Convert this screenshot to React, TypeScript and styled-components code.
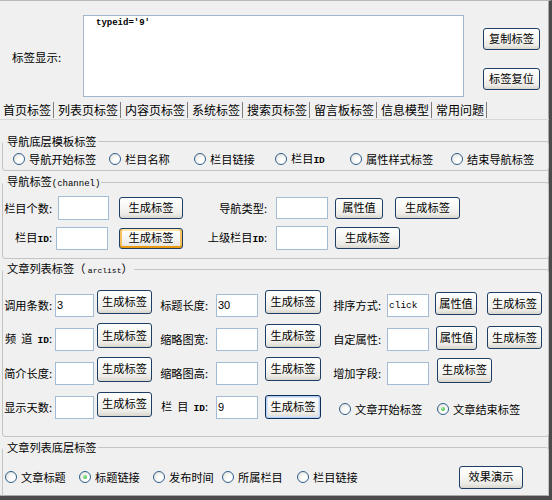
import React from "react";
import styled, { createGlobalStyle, css } from "styled-components";

const GlobalStyle = createGlobalStyle`
	html, body {
		margin: 0;
		padding: 0;
		background: #f0f0f0;
	}
	body {
		font-family: "Noto Sans CJK SC", "Liberation Sans", sans-serif;
		font-size: 11.2px;
		color: #000;
	}
	* {
		box-sizing: border-box;
	}
`;

const Window = styled.div`
	width: 552px;
	height: 500px;
	overflow: hidden;
	display: flex;
	flex-direction: column;
	background: #f0f0f0;
	border-top: 1px solid #b9b9b9;
	border-right: 3px solid #4b4b4b;
	border-bottom: 4px solid #4b4b4b;
	box-shadow: inset -1px -1px 0 #a8a8a8;
`;

const Header = styled.div`
	height: 99px;
	flex: none;
	display: grid;
	grid-template-columns: 83px 381px 1fr;
`;

const HeaderLabel = styled.div`
	font-size: 11.5px;
	line-height: 16px;
	padding-left: 12px;
	margin-top: 48px;
	white-space: nowrap;
`;

const TagText = styled.textarea`
	margin-top: 14px;
	height: 82px;
	width: 381px;
	resize: none;
	border: 1px solid #9fb6cd;
	background: #fff;
	padding: 2px 12px;
	font-family: "Liberation Mono", monospace;
	font-size: 9px;
	font-weight: bold;
	color: #000;
	outline: none;
`;

const SideButtons = styled.div`
	display: flex;
	flex-direction: column;
	gap: 18px;
	padding: 27px 0 0 19px;
`;

const TabStrip = styled.div`
	height: 20px;
	flex: none;
	display: flex;
	align-items: center;
	border-bottom: 1px solid #d8d8d8;
`;

const Tab = styled.div<{ $active?: boolean }>`
	font-size: 12px;
	line-height: 16px;
	padding: 0 2px 0 ${(p) => (p.$active ? 3 : 4)}px;
	border-right: 1px solid #7d7d7d;
	white-space: nowrap;
`;

const TabPage = styled.div`
	padding-top: 13px;
	display: flex;
	flex-direction: column;
`;

const Group = styled.fieldset<{ $mt: number; $pt: number; $pb: number }>`
	margin: ${(p) => p.$mt}px 0 0 2px;
	padding: ${(p) => p.$pt}px 0 ${(p) => p.$pb}px 0;
	border: 1px solid #c4c4c4;
	border-radius: 3px;
	min-width: 0;
`;

const Legend = styled.legend`
	padding: 0 1px 0 4px;
	line-height: 16px;
	font-size: 11.2px;
	white-space: nowrap;
`;

const Latin = styled.span<{ $size?: number; $bold?: boolean }>`
	font-family: "Liberation Mono", monospace;
	font-size: ${(p) => p.$size ?? 9}px;
	font-weight: ${(p) => (p.$bold ? "bold" : "normal")};
`;

const Row = styled.div<{ $h: number; $pl?: number }>`
	height: ${(p) => p.$h}px;
	display: flex;
	align-items: center;
	padding-left: ${(p) => p.$pl ?? 0}px;
`;

const Label = styled.div<{ $w: number }>`
	flex: none;
	width: ${(p) => p.$w}px;
	text-align: right;
	padding-right: 1px;
	white-space: pre;
	line-height: 16px;
`;

const Field = styled.input<{ $w: number; $h: number; $ml: number; $mono?: boolean }>`
	flex: none;
	width: ${(p) => p.$w}px;
	height: ${(p) => p.$h}px;
	margin: 0 0 0 ${(p) => p.$ml}px;
	padding: 0 1px;
	border: 1px solid #a3bbd5;
	background: #fff;
	color: #000;
	outline: none;
	font-family: ${(p) => (p.$mono ? '"Liberation Mono", monospace' : '"Liberation Sans", sans-serif')};
	font-size: ${(p) => (p.$mono ? 9.5 : 11)}px;
`;

const Btn = styled.button<{
	$w: number;
	$h: number;
	$ml?: number;
	$lift?: number;
	$state?: "hot" | "focus";
}>`
	flex: none;
	width: ${(p) => p.$w}px;
	height: ${(p) => p.$h}px;
	margin: 0 0 ${(p) => (p.$lift ?? 0) * 2}px ${(p) => p.$ml ?? 0}px;
	padding: 0;
	font-family: inherit;
	font-size: 11.2px;
	line-height: 1;
	color: #000;
	border: 1px solid #1d3f66;
	border-radius: 3px;
	background: linear-gradient(#ffffff 0%, #f7f7f4 45%, #ecebe6 80%, #d9d6cd 100%);
	white-space: nowrap;
	${(p) =>
		p.$state === "hot" &&
		css`
			box-shadow: inset 0 -2px 0 #e8990e, inset 2px 0 0 #f6c15c,
				inset -2px 0 0 #f6c15c, inset 0 2px 0 #ffe7ad;
		`}
	${(p) =>
		p.$state === "focus" &&
		css`
			border-color: #0c2f5a;
			box-shadow: inset 0 0 0 1px #b9d0f2, inset 0 0 0 2px #d8e4f6;
		`}
`;

const RadioItem = styled.div<{ $w?: number; $drop?: number; $ml?: number }>`
	flex: none;
	display: flex;
	align-items: center;
	gap: 4px;
	width: ${(p) => (p.$w ? `${p.$w}px` : "auto")};
	margin-top: ${(p) => (p.$drop ?? 0) * 2}px;
	margin-left: ${(p) => p.$ml ?? 0}px;
	white-space: nowrap;
	line-height: 16px;
`;

const RadioDot = styled.span<{ $on?: boolean }>`
	position: relative;
	flex: none;
	width: 12px;
	height: 12px;
	border-radius: 50%;
	border: 1px solid #2f5f8c;
	background: radial-gradient(circle at 70% 70%, #ffffff 25%, #ebebe6 70%, #d4d4cc 100%);
	&::after {
		content: "";
		display: ${(p) => (p.$on ? "block" : "none")};
		position: absolute;
		left: 3px;
		top: 3px;
		width: 4px;
		height: 4px;
		border-radius: 50%;
		background: radial-gradient(circle at 35% 35%, #a6eba6, #27a827);
	}
`;

function Radio({
	text,
	w,
	on,
	drop,
	ml,
}: {
	text: React.ReactNode;
	w?: number;
	on?: boolean;
	drop?: number;
	ml?: number;
}) {
	return (
		<RadioItem $w={w} $drop={drop} $ml={ml}>
			<RadioDot $on={on} />
			<span>{text}</span>
		</RadioItem>
	);
}

const tabs = ["首页标签", "列表页标签", "内容页标签", "系统标签", "搜索页标签", "留言板标签", "信息模型", "常用问题"];

const ID = () => (
	<Latin $size={9.5} $bold>
		ID
	</Latin>
);

export default function App() {
	return (
		<>
			<GlobalStyle />
			<Window>
				<Header>
					<HeaderLabel>标签显示:</HeaderLabel>
					<TagText defaultValue="typeid='9'" readOnly />
					<SideButtons>
						<Btn $w={57} $h={22}>复制标签</Btn>
						<Btn $w={57} $h={22}>标签复位</Btn>
					</SideButtons>
				</Header>

				<TabStrip>
					{tabs.map((t, i) => (
						<Tab key={t} $active={i === 0}>
							{t}
						</Tab>
					))}
				</TabStrip>

				<TabPage>
					<Group $mt={0} $pt={1} $pb={2}>
						<Legend>导航底层模板标签</Legend>
						<Row $h={18} $pl={10}>
							<Radio text="导航开始标签" w={96} />
							<Radio text="栏目名称" w={85} />
							<Radio text="栏目链接" w={81} />
							<Radio text={<>栏目<ID /></>} w={75} />
							<Radio text="属性样式标签" w={101} />
							<Radio text="结束导航标签" />
						</Row>
					</Group>

					<Group $mt={2} $pt={1} $pb={5}>
						<Legend>
							导航标签<Latin>(channel)</Latin>
						</Legend>
						<Row $h={30}>
							<Label $w={50}>栏目个数:</Label>
							<Field $w={51} $h={24} $ml={5} />
							<Btn $w={64} $h={22} $ml={10}>生成标签</Btn>
							<Label $w={85}>导航类型:</Label>
							<Field $w={52} $h={22} $ml={8} />
							<Btn $w={48} $h={21} $ml={7}>属性值</Btn>
							<Btn $w={65} $h={22} $ml={12}>生成标签</Btn>
						</Row>
						<Row $h={30}>
							<Label $w={50}>栏目<ID />:</Label>
							<Field $w={52} $h={23} $ml={3} />
							<Btn $w={64} $h={21} $ml={11} $state="hot">生成标签</Btn>
							<Label $w={85}>上级栏目<ID />:</Label>
							<Field $w={52} $h={24} $ml={8} />
							<Btn $w={65} $h={22} $ml={7}>生成标签</Btn>
						</Row>
					</Group>

					<Group $mt={1} $pt={9} $pb={12}>
						<Legend>
							文章列表标签（ <Latin $size={8}>arclist</Latin>）
						</Legend>
						<Row $h={34}>
							<Label $w={50}>调用条数:</Label>
							<Field $w={39} $h={23} $ml={2} defaultValue="3" />
							<Btn $w={55} $h={24} $ml={3} $lift={3.5}>生成标签</Btn>
							<Label $w={57}>标题长度:</Label>
							<Field $w={42} $h={23} $ml={7} defaultValue="30" />
							<Btn $w={56} $h={24} $ml={7} $lift={3.5}>生成标签</Btn>
							<Label $w={61}>排序方式:</Label>
							<Field $w={42} $h={23} $ml={5} $mono defaultValue="click" />
							<Btn $w={42} $h={23} $ml={6} $lift={1.5}>属性值</Btn>
							<Btn $w={55} $h={23} $ml={10} $lift={1.5}>生成标签</Btn>
						</Row>
						<Row $h={34}>
							<Label $w={50}>频  道  <ID />:</Label>
							<Field $w={39} $h={23} $ml={2} />
							<Btn $w={55} $h={25} $ml={3} $lift={3.5}>生成标签</Btn>
							<Label $w={57}>缩略图宽:</Label>
							<Field $w={42} $h={23} $ml={7} />
							<Btn $w={56} $h={24} $ml={7} $lift={3.5}>生成标签</Btn>
							<Label $w={61}>自定属性:</Label>
							<Field $w={42} $h={23} $ml={5} />
							<Btn $w={41} $h={24} $ml={7} $lift={1}>属性值</Btn>
							<Btn $w={55} $h={23} $ml={10} $lift={1.5}>生成标签</Btn>
						</Row>
						<Row $h={34}>
							<Label $w={50}>简介长度:</Label>
							<Field $w={39} $h={23} $ml={2} />
							<Btn $w={55} $h={25} $ml={3} $lift={4}>生成标签</Btn>
							<Label $w={57}>缩略图高:</Label>
							<Field $w={42} $h={23} $ml={7} />
							<Btn $w={56} $h={24} $ml={7} $lift={4}>生成标签</Btn>
							<Label $w={61}>增加字段:</Label>
							<Field $w={42} $h={23} $ml={5} />
							<Btn $w={55} $h={25} $ml={8} $lift={3}>生成标签</Btn>
						</Row>
						<Row $h={34}>
							<Label $w={50}>显示天数:</Label>
							<Field $w={39} $h={23} $ml={2} />
							<Btn $w={55} $h={25} $ml={3} $lift={3}>生成标签</Btn>
							<Label $w={57}>栏  目  <ID />:</Label>
							<Field $w={42} $h={23} $ml={7} defaultValue="9" />
							<Btn $w={56} $h={24} $ml={7} $lift={0.5} $state="focus">生成标签</Btn>
							<Radio text="文章开始标签" w={98} drop={1.5} ml={18} />
							<Radio text="文章结束标签" on drop={1.5} />
						</Row>
					</Group>

					<Group $mt={2} $pt={8} $pb={5}>
						<Legend>文章列表底层标签</Legend>
						<Row $h={28} $pl={2}>
							<Radio text="文章标题" w={74} />
							<Radio text="标题链接" w={74} on />
							<Radio text="发布时间" w={69} />
							<Radio text="所属栏目" w={75} />
							<Radio text="栏目链接" w={162} />
							<Btn $w={64} $h={23}>效果演示</Btn>
						</Row>
					</Group>
				</TabPage>
			</Window>
		</>
	);
}
